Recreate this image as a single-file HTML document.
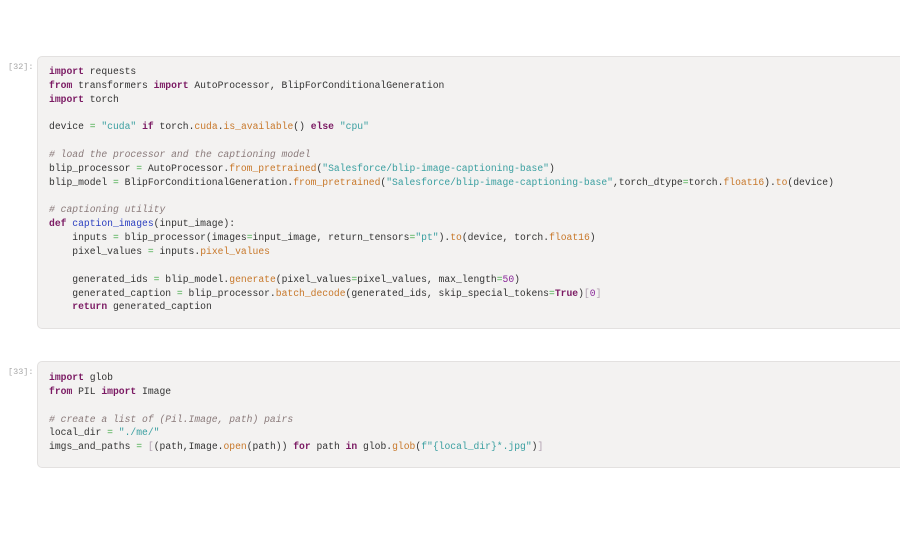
<!DOCTYPE html>
<html><head><meta charset="utf-8"><style>
html,body{margin:0;padding:0;background:#fff;width:900px;height:548px;overflow:hidden;position:relative}
.p{position:absolute;left:8px;font:8.5px "Liberation Mono",monospace;color:#a8a8a8}
.box{position:absolute;left:37px;width:880px;background:#f3f2f1;border:1px solid #e3e1e0;border-radius:5px}
pre{position:absolute;left:49px;margin:0;font:9.7px/13.85px "Liberation Mono",monospace;color:#333}
.k{color:#7b1a63;font-weight:bold}
.s{color:#3a9fa0}
.c{color:#8a7a7a;font-style:italic}
.o{color:#4caf50}
.f{color:#c8782a}
.d{color:#2b3fc0}
.n{color:#8a2a9a}
.b{color:#b0a0b0}
</style></head><body>
<div class="p" style="top:62px">[32]:</div>
<div class="box" style="top:56px;height:271px"></div>
<pre style="top:65px"><span class="k">import</span> requests
<span class="k">from</span> transformers <span class="k">import</span> AutoProcessor, BlipForConditionalGeneration
<span class="k">import</span> torch

device <span class="o">=</span> <span class="s">"cuda"</span> <span class="k">if</span> torch.<span class="f">cuda</span>.<span class="f">is_available</span>() <span class="k">else</span> <span class="s">"cpu"</span>

<span class="c"># load the processor and the captioning model</span>
blip_processor <span class="o">=</span> AutoProcessor.<span class="f">from_pretrained</span>(<span class="s">"Salesforce/blip-image-captioning-base"</span>)
blip_model <span class="o">=</span> BlipForConditionalGeneration.<span class="f">from_pretrained</span>(<span class="s">"Salesforce/blip-image-captioning-base"</span>,torch_dtype<span class="o">=</span>torch.<span class="f">float16</span>).<span class="f">to</span>(device)

<span class="c"># captioning utility</span>
<span class="k">def</span> <span class="d">caption_images</span>(input_image):
    inputs <span class="o">=</span> blip_processor(images<span class="o">=</span>input_image, return_tensors<span class="o">=</span><span class="s">"pt"</span>).<span class="f">to</span>(device, torch.<span class="f">float16</span>)
    pixel_values <span class="o">=</span> inputs.<span class="f">pixel_values</span>

    generated_ids <span class="o">=</span> blip_model.<span class="f">generate</span>(pixel_values<span class="o">=</span>pixel_values, max_length<span class="o">=</span><span class="n">50</span>)
    generated_caption <span class="o">=</span> blip_processor.<span class="f">batch_decode</span>(generated_ids, skip_special_tokens<span class="o">=</span><span class="k">True</span>)<span class="b">[</span><span class="n">0</span><span class="b">]</span>
    <span class="k">return</span> generated_caption</pre>
<div class="p" style="top:367px">[33]:</div>
<div class="box" style="top:361px;height:105px"></div>
<pre style="top:371px"><span class="k">import</span> glob
<span class="k">from</span> PIL <span class="k">import</span> Image

<span class="c"># create a list of (Pil.Image, path) pairs</span>
local_dir <span class="o">=</span> <span class="s">"./me/"</span>
imgs_and_paths <span class="o">=</span> <span class="b">[</span>(path,Image.<span class="f">open</span>(path)) <span class="k">for</span> path <span class="k">in</span> glob.<span class="f">glob</span>(<span class="s">f"{local_dir}*.jpg"</span>)<span class="b">]</span></pre>
</body></html>
